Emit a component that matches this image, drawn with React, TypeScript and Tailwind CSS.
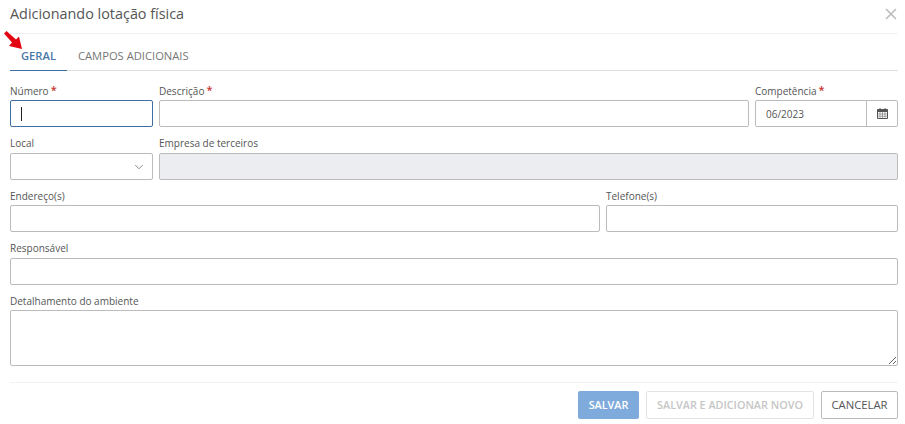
import { ChevronDown, X } from "lucide-react";

function Label({ text, required, tall }: { text: string; required?: boolean; tall?: boolean }) {
  return (
    <div className={`flex items-start text-[10px] leading-[13px] text-[#555] ${tall ? "h-[16px]" : "h-[15px]"}`}>
      {text}
      {required && <span className="ml-[2px] -mt-[1px] text-[11px] font-semibold leading-[11px] text-[#c9302c]">*</span>}
    </div>
  );
}

function CalendarIcon() {
  return (
    <svg width="11" height="11" viewBox="0 0 11 11" fill="none" stroke="#555" strokeWidth="1">
      <path d="M.5 2h10v8.5H.5z" />
      <path d="M.5 1.5h10v2H.5z" fill="#555" />
      <path d="M3 0v2M8 0v2" />
      <path d="M.5 6h10M.5 8.2h10M3 4v6.5M5.5 4v6.5M8 4v6.5" strokeWidth=".5" />
    </svg>
  );
}

const inputClass = "h-[27px] w-full rounded-[2px] border";

export default function App() {
  return (
    <div className="h-[424px] w-[905px] overflow-hidden bg-white pl-[10px] pr-[7px] font-['Open_Sans',sans-serif]">
      {/* Header */}
      <div className="flex h-[34px] items-center justify-between border-b border-[#f1f1f1] pb-[5px]">
        <h1 className="text-[14.4px] leading-[20px] text-[#555]">Adicionando lotação física</h1>
        <X className="-mr-[2px] text-[#bdbdbd]" size={18} strokeWidth={2.2} />
      </div>

      {/* Tabs */}
      <div className="relative mt-[9px] flex h-[28px] border-b border-[#dedede] text-[11.2px]">
        <svg className="absolute left-[-6px] top-[-12px]" width="20" height="19" viewBox="0 0 20 19">
          <path d="M0 2.5 L2.5 0 L12 8.5 L15 5.5 L18 18 L5 15 L8 11.5 Z" fill="#e30613" />
        </svg>
        <div className="-mb-px flex w-[57px] items-center justify-center border-b border-[#3f6f9f] font-semibold text-[#4a78a8]">
          GERAL
        </div>
        <div className="flex items-center pl-[11px] text-[#777]">CAMPOS ADICIONAIS</div>
      </div>

      {/* Form */}
      <div className="mt-[14px] grid grid-cols-12 gap-x-[6px] gap-y-[10px]">
        <div className="col-span-2">
          <Label text="Número" required />
          <div className={`${inputClass} flex items-center border-[#3f6f9f] pl-[10px]`}>
            <div className="h-[14px] w-px bg-[#222]" />
          </div>
        </div>
        <div className="col-span-8">
          <Label text="Descrição" required />
          <div className={`${inputClass} border-[#bbb]`} />
        </div>
        <div className="col-span-2">
          <Label text="Competência" required />
          <div className={`${inputClass} flex items-center border-[#bbb]`}>
            <div className="flex-1 pl-[10px] pt-[1px] text-[10px] text-[#555]">06/2023</div>
            <div className="flex h-full w-[31px] items-center justify-center border-l border-[#bbb]">
              <CalendarIcon />
            </div>
          </div>
        </div>

        <div className="col-span-2">
          <Label text="Local" tall />
          <div className={`${inputClass} flex items-center justify-end border-[#bbb] pr-[6px]`}>
            <ChevronDown className="text-[#777]" size={14} strokeWidth={1.5} />
          </div>
        </div>
        <div className="col-span-10">
          <Label text="Empresa de terceiros" tall />
          <div className={`${inputClass} border-[#bbb] bg-[#ecedf1]`} />
        </div>

        <div className="col-span-8">
          <Label text="Endereço(s)" />
          <div className={`${inputClass} border-[#bbb]`} />
        </div>
        <div className="col-span-4">
          <Label text="Telefone(s)" />
          <div className={`${inputClass} border-[#bbb]`} />
        </div>

        <div className="col-span-12">
          <Label text="Responsável" tall />
          <div className={`${inputClass} border-[#bbb]`} />
        </div>

        <div className="col-span-12">
          <Label text="Detalhamento do ambiente" />
          <div className="relative h-[56px] w-full rounded-[2px] border border-[#bbb]">
            <svg className="absolute bottom-0 right-0" width="9" height="9" viewBox="0 0 9 9" stroke="#666" strokeWidth="1">
              <path d="M1 8 8 1M5 8l3-3" />
            </svg>
          </div>
        </div>
      </div>

      {/* Footer */}
      <div className="mt-[16px] flex justify-end gap-[7px] border-t border-[#f1f1f1] pt-[8px] text-[10.8px]">
        <div className="flex h-[28px] w-[61px] items-center justify-center rounded-[2px] bg-[#7fabdc] font-semibold text-white">
          SALVAR
        </div>
        <div className="flex h-[28px] w-[168px] items-center justify-center rounded-[2px] border border-[#e3e3e3] font-semibold text-[#c6c6c6]">
          SALVAR E ADICIONAR NOVO
        </div>
        <div className="flex h-[28px] w-[77px] items-center justify-center rounded-[2px] border border-[#bbb] text-[11.3px] text-[#555]">
          CANCELAR
        </div>
      </div>
    </div>
  );
}
